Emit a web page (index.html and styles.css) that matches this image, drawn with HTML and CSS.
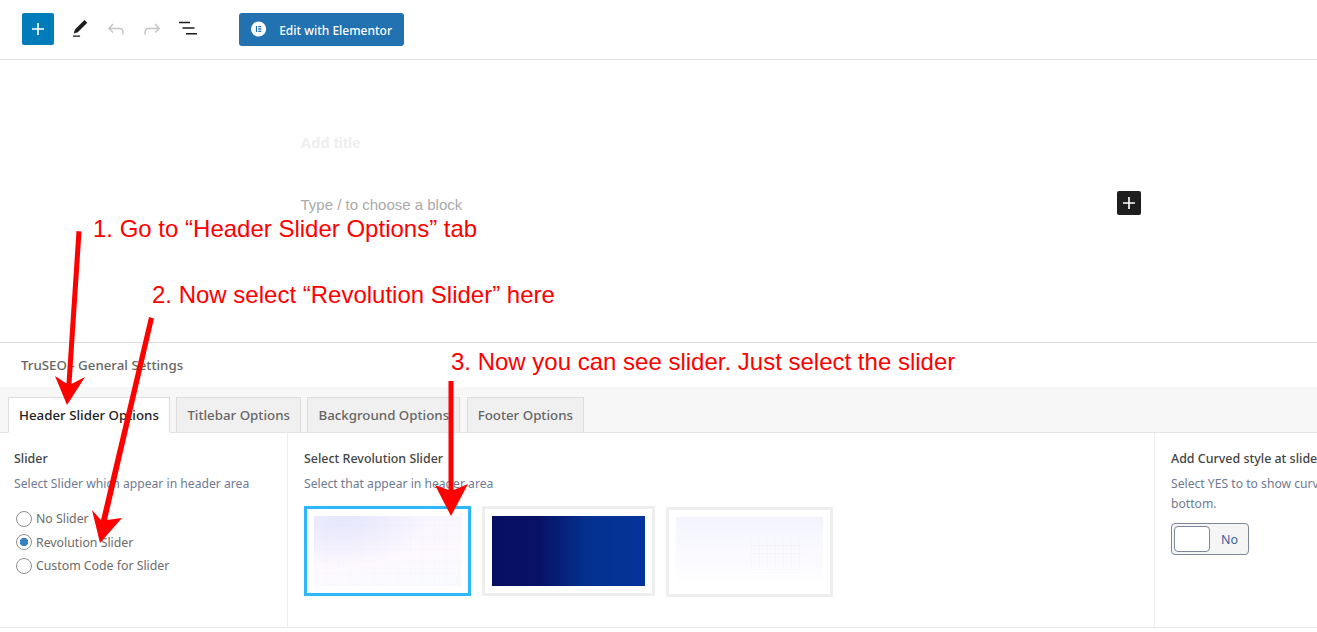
FILE: index.html
```html
<!DOCTYPE html>
<html lang="en">
<head>
    <meta charset="UTF-8">
    <meta name="viewport" content="width=device-width, initial-scale=1.0">
    <title>Edit Page</title>
    <link rel="stylesheet" href="styles.css">
</head>
<body>
    <div class="page">
        <header class="toolbar">
            <button class="add-btn">
                <svg viewBox="0 0 24 24" width="24" height="24"><path d="M18 11.2h-5.2V6h-1.6v5.2H6v1.6h5.2V18h1.6v-5.2H18z"/></svg>
            </button>
            <svg class="tool" viewBox="-1.6 -1.4 27 27" width="24" height="24"><path d="M20.1 5.1L16.9 2 6.2 12.7l-1.3 4.4 4.5-1.3L20.1 5.1zM4 20.8h8v-1.5H4v1.5z"/></svg>
            <svg class="tool off" viewBox="0 0 24 24" width="24" height="24"><path d="M18.3 11.7c-.6-.6-1.4-.9-2.3-.9H6.7l2.9-3.3-1.1-1-4.5 5L8.500 16l1-1-2.700-2.700H16c.5 0 .9.2 1.300.5 1 1 1 3.400 1 4.500v.3h1.500v-.2c0-1.500 0-4.300-1.500-5.700z"/></svg>
            <svg class="tool off" viewBox="0 0 24 24" width="24" height="24"><path d="M15.6 6.5l-1.1 1 2.9 3.3H8c-.9 0-1.7.3-2.300.9-1.400 1.500-1.400 4.200-1.400 5.600v.2h1.500v-.3c0-1.100 0-3.500 1-4.500.3-.3.7-.5 1.300-.5h9.200L14.500 15l1.100 1.100 4.600-4.600-4.600-5z"/></svg>
            <svg class="tool" viewBox="0 0 24 24" width="24" height="24"><path d="M3 4.800h11v1.500H3zM6.500 10.300h12v1.500h-12zM10 15.900h11v1.500H10z"/></svg>
            <button class="elementor-btn">
                <svg viewBox="0 0 18 18" width="18" height="18"><circle cx="9" cy="9" r="9" fill="#fff"/><path fill="#2271b1" d="M5.800 5.300h1.500v7.400H5.800zM8.600 5.300h3.600v1.500H8.600zM8.600 8.250h3.600v1.500H8.600zM8.600 11.200h3.600v1.500H8.600z"/></svg>
                <span class="elementor-text">Edit with Elementor</span>
            </button>
        </header>

        <main class="editor">
            <div class="post-title">Add title</div>
            <div class="block-row">
                <span class="block-hint">Type / to choose a block</span>
                <span class="block-add">
                    <svg viewBox="0 0 24 24" width="24" height="24"><path d="M18 11.200h-5.200V6h-1.600v5.200H6v1.600h5.200V18h1.600v-5.200H18z"/></svg>
                </span>
            </div>
        </main>

        <section class="metabox">
            <h2 class="metabox-title">TruSEO - General Settings</h2>
            <div class="tabs">
                <a class="tab active">Header Slider Options</a>
                <a class="tab">Titlebar Options</a>
                <a class="tab">Background Options</a>
                <a class="tab">Footer Options</a>
            </div>
            <div class="options">
                <div class="col col-slider">
                    <h3>Slider</h3>
                    <p>Select Slider which appear in header area</p>
                    <label class="radio"><input type="radio" name="slider"> No Slider</label>
                    <label class="radio"><input type="radio" name="slider" checked> Revolution Slider</label>
                    <label class="radio"><input type="radio" name="slider"> Custom Code for Slider</label>
                </div>
                <div class="col col-rev">
                    <h3>Select Revolution Slider</h3>
                    <p>Select that appear in header area</p>
                    <div class="thumbs">
                        <div class="thumb selected"><div class="pic pic-light"></div></div>
                        <div class="thumb wide"><div class="pic pic-dark"></div></div>
                        <div class="thumb low"><div class="pic pic-pale"></div></div>
                    </div>
                </div>
                <div class="col col-curved">
                    <h3>Add Curved style at slider bottom</h3>
                    <p>Select YES to to show curved style at slider<br>bottom.</p>
                    <div class="switch"><span class="knob"></span><span class="switch-label">No</span></div>
                </div>
            </div>
        </section>

        <!-- red notes drawn over the screenshot -->
        <div class="note note-1">1. Go to “Header Slider Options” tab</div>
        <div class="note note-2">2. Now select “Revolution Slider” here</div>
        <div class="note note-3">3. Now you can see slider. Just select the slider</div>
        <svg class="arrows" viewBox="0 0 1317 632" width="1317" height="632">
            <path d="M76.500 231L81.500 231.500L71.500 384L85 377L67 405L55 376L66.500 383.500z"/>
            <path d="M149 317L154 318.500L107 520L122 518L100 543L92 510L101 520z"/>
            <path d="M448.500 381H453.500V490L468 484L451 516L435 485L448.500 490z"/>
        </svg>
    </div>
</body>
</html>
```

FILE: styles.css
```css
* {
    box-sizing: border-box;
}
body {
    margin: 0;
    font-family: "Noto Sans", sans-serif;
    font-size: 13.3px;
    color: #444;
    background: #fff;
}
.page {
    position: relative;
    width: 1317px;
    height: 632px;
    overflow: hidden;
}
.toolbar {
    display: flex;
    align-items: center;
    height: 60px;
    padding: 0 0 1px 22px;
    border-bottom: 1px solid #e0e0e0;
}
.add-btn {
    display: flex;
    align-items: center;
    justify-content: center;
    width: 32px;
    height: 32px;
    margin-right: 14px;
    padding: 0;
    border: none;
    border-radius: 2px;
    background: #007cba;
    fill: #fff;
}
.tool {
    margin-right: 12px;
    fill: #1e1e1e;
}
.tool.off {
    fill: #c4c4c4;
}
.elementor-btn {
    display: flex;
    align-items: center;
    gap: 11px;
    width: 165px;
    height: 33px;
    margin-left: 27px;
    padding: 0 12px;
    border: none;
    border-radius: 3px;
    background: #2271b1;
    color: #fff;
    font-family: "Noto Sans", sans-serif;
    font-size: 12px;
    font-weight: 500;
    white-space: nowrap;
}
.elementor-text {
    padding: 2px 0 0 2px;
}
.editor {
    height: 282px;
    padding: 74px 176px 0 300.5px;
    font-family: "Liberation Sans", sans-serif;
}
.post-title {
    height: 18px;
    font-size: 15px;
    line-height: 18px;
    font-weight: bold;
    color: #eee;
}
.block-row {
    display: flex;
    align-items: center;
    justify-content: space-between;
    height: 24px;
    margin-top: 39px;
    font-size: 15px;
    color: #aaa;
}
.block-hint {
    margin-top: 2px;
}
.block-add {
    width: 24px;
    height: 24px;
    border-radius: 2px;
    background: #1e1e1e;
    fill: #fff;
}
.block-add svg {
    display: block;
}
.metabox {
    height: 286px;
    border-top: 1px solid #ddd;
    border-bottom: 1px solid #e8e8e8;
}
.metabox-title {
    height: 44px;
    margin: 0;
    padding-left: 21px;
    font-size: 13.3px;
    font-weight: 500;
    line-height: 44px;
    color: #666;
}
.tabs {
    display: flex;
    align-items: flex-end;
    gap: 6.5px;
    height: 46px;
    padding-left: 8px;
    background: #f7f7f7;
    border-bottom: 1px solid #e4e4e4;
}
.tab {
    height: 36px;
    margin-bottom: -1px;
    padding: 0 10px;
    border: 1px solid #ddd;
    border-bottom-color: #e4e4e4;
    background: #f0f0f0;
    font-weight: 500;
    line-height: 35px;
    color: #666;
    white-space: nowrap;
}
.tab.active {
    background: #fff;
    border-bottom-color: #fff;
    color: #222;
}
.options {
    display: flex;
    height: 194px;
}
.col {
    flex: none;
    padding-top: 17px;
}
.col h3 {
    margin: 0 0 6px;
    font-size: 12.45px;
    font-weight: 500;
    line-height: 18px;
    color: #444;
    white-space: nowrap;
}
.col p {
    margin: 0;
    font-size: 12.15px;
    line-height: 20px;
    color: #6f7a92;
    white-space: nowrap;
}
.col-slider {
    width: 288px;
    padding-left: 14px;
    border-right: 1px solid #eee;
}
.col-slider p {
    margin-bottom: 13px;
}
.radio {
    display: flex;
    align-items: center;
    gap: 4px;
    height: 23.500px;
    padding-left: 2px;
    font-size: 12.3px;
    color: #6b6b6b;
}
.radio input {
    appearance: none;
    width: 16px;
    height: 16px;
    margin: 0;
    border: 1px solid #8c8f94;
    border-radius: 50%;
    background: #fff;
}
.radio input:checked {
    background: radial-gradient(circle, #3582c4 0 4px, #fff 4.5px);
}
.col-rev {
    width: 867px;
    padding-left: 16px;
    border-right: 1px solid #eee;
}
.thumbs {
    display: flex;
    align-items: flex-start;
    gap: 11px;
    margin-top: 12px;
}
.thumb {
    flex: none;
    width: 167px;
    height: 90px;
    padding: 7px;
    border: 3px solid #eee;
}
.thumb.selected {
    padding-right: 6px;
    border-color: #2cb8fb;
}
.thumb.wide {
    width: 173px;
}
.thumb.low {
    margin-top: 1px;
}
.pic {
    width: 100%;
    height: 70px;
}
.pic-light {
    background:
        repeating-linear-gradient(90deg, rgba(200, 200, 235, 0.05) 0 1px, transparent 1px 12px),
        repeating-linear-gradient(0deg, rgba(200, 200, 235, 0.05) 0 1px, transparent 1px 12px),
        radial-gradient(ellipse at 20% 0, #e6e6fc 0, rgba(230, 230, 252, 0) 50%),
        linear-gradient(170deg, #f5f3fe 0, #fdf9fe 60%, #f8fbff 100%);
}
.pic-dark {
    background: linear-gradient(90deg, #070f63 0, #071165 30%, #04318f 62%, #04349c 100%);
}
.pic-pale {
    background:
        repeating-linear-gradient(90deg, rgba(200, 200, 225, 0.08) 0 1px, transparent 1px 8px) 75px 21px / 53px 32px no-repeat,
        repeating-linear-gradient(0deg, rgba(200, 200, 225, 0.08) 0 1px, transparent 1px 8px) 75px 21px / 53px 32px no-repeat,
        linear-gradient(180deg, #f4f4fe 0, #fafaff 55%, #fff 100%);
}
.col-curved {
    width: 300px;
    padding-left: 16px;
}
.switch {
    display: flex;
    align-items: center;
    width: 78px;
    height: 32px;
    margin-top: 9px;
    padding: 2px;
    border: 1px solid #7d8798;
    border-radius: 4px;
    background: #f5f5f5;
}
.knob {
    width: 36px;
    height: 26px;
    border: 1px solid #7d8798;
    border-radius: 4px;
    background: #fff;
}
.switch-label {
    margin-left: 11px;
    font-size: 12.5px;
    color: #3a5f94;
}
.note {
    position: absolute;
    font-family: "Liberation Sans", sans-serif;
    font-size: 24px;
    line-height: 28px;
    color: #f00;
    white-space: nowrap;
}
.note-1 {
    left: 93px;
    top: 215px;
}
.note-2 {
    left: 152px;
    top: 281px;
}
.note-3 {
    left: 451px;
    top: 348px;
}
.arrows {
    position: absolute;
    left: 0;
    top: 0;
    fill: #f00;
}
```
